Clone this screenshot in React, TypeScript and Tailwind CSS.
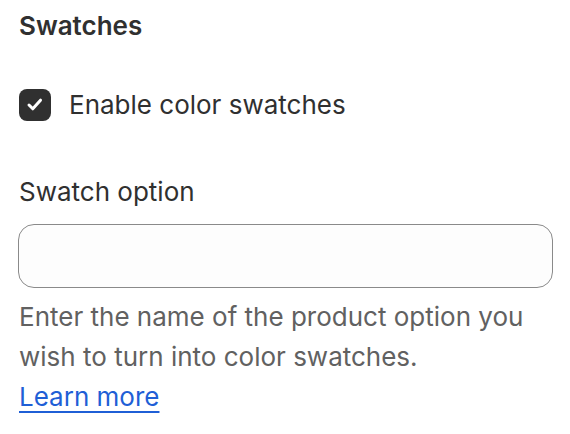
import { useState } from "react";

export default function App() {
  const [checked, setChecked] = useState(true);

  return (
    <div className="min-h-screen bg-white pl-[19px] pr-4 pt-[6px] font-['Inter',sans-serif] text-[26px] leading-[40px] text-[#303030]">
      <h2 className="font-semibold">Swatches</h2>

      <label className="mt-[39px] flex items-center gap-[18px]">
        <button
          type="button"
          onClick={() => setChecked(!checked)}
          className="h-8 w-8 shrink-0 rounded-lg bg-[#303030]"
        >
          {checked && (
            <svg width="32" height="32" viewBox="0 0 32 32" fill="none" className="block">
              <path
                d="M10 16l3.8 3.8L21.5 11.2"
                stroke="white"
                strokeWidth="3"
                strokeLinecap="round"
                strokeLinejoin="round"
              />
            </svg>
          )}
        </button>
        <span>Enable color swatches</span>
      </label>

      <div className="mt-[47px]">
        <div>Swatch option</div>
        <input
          type="text"
          className="mt-3 -ml-px block h-16 w-[535px] rounded-2xl border border-[#8a8a8a] bg-[#fdfdfd] px-6 outline-none"
        />
        <p className="mt-[9px] text-[#616161]">
          Enter the name of the product option you wish to turn into color swatches.
        </p>
        <a href="#" className="text-[#1f5fd6] underline underline-offset-[5px]">
          Learn more
        </a>
      </div>
    </div>
  );
}
